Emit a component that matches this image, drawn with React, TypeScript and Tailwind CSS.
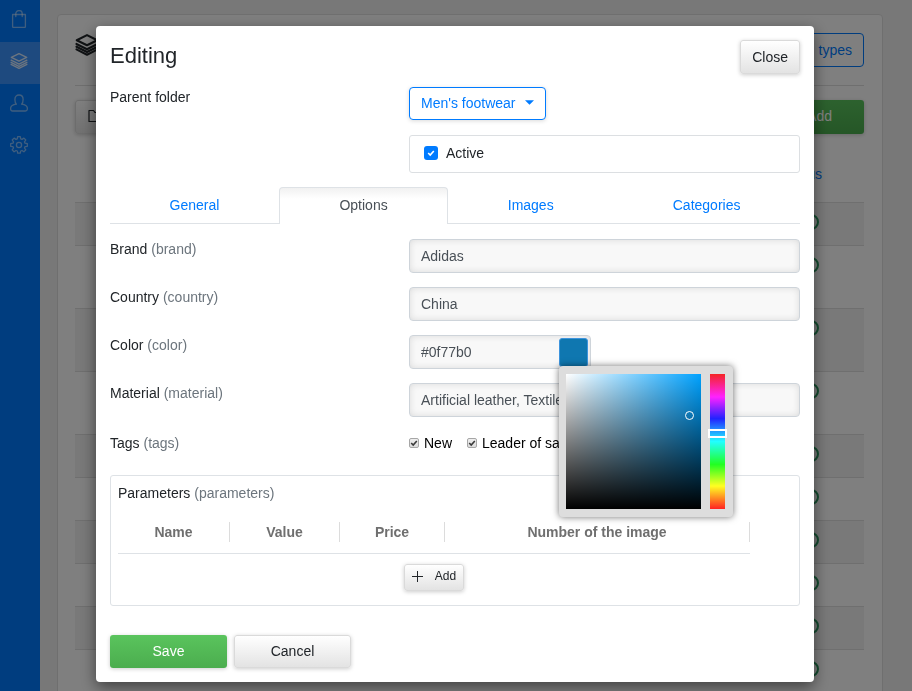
import React, { useState } from "react";

type IconProps = { className?: string };

const stroke = {
  fill: "none",
  stroke: "currentColor",
  strokeLinejoin: "round" as const,
  strokeLinecap: "round" as const,
};

function BagIcon({ className }: IconProps) {
  return (
    <svg viewBox="0 0 18 18" className={className} {...stroke} strokeWidth="1.3" aria-hidden="true">
      <path d="M2.600 4.500h12.800v12.100a.8.8 0 0 1-.8.8H3.400a.8.8 0 0 1-.8-.8z" />
      <path d="M5.800 6.500V3.700a3.200 3.100 0 0 1 6.400 0v2.800" />
    </svg>
  );
}

function LayersIcon({ className }: IconProps) {
  return (
    <svg viewBox="0 0 18 18" className={className} {...stroke} strokeWidth="1.3" aria-hidden="true">
      <path d="M9 1.600 16.700 5.400 9 9.200 1.300 5.400z" />
      <path d="M1.100 8.200 9 12.200l7.900-4" />
      <path d="M1.100 10.300 9 14.300l7.900-4" />
      <path d="M1.100 12.300 9 16.300l7.900-4" />
    </svg>
  );
}

function UserIcon({ className }: IconProps) {
  return (
    <svg viewBox="0 0 18 18" className={className} {...stroke} strokeWidth="1.3" aria-hidden="true">
      <path d="M6.400 10.200C5.400 9.200 4.900 7.200 4.900 5.400 4.900 2.600 6.600 1 9 1s4.100 1.600 4.100 4.400c0 1.800-.5 3.800-1.500 4.800 3.100.4 5.800 1.800 5.800 4.300 0 1.500-.6 2.500-2 2.500H2.600c-1.400 0-2-1-2-2.500 0-2.500 2.700-3.900 5.800-4.300z" />
    </svg>
  );
}

function GearIcon({ className }: IconProps) {
  return (
    <svg viewBox="0 0 18 18" className={className} {...stroke} strokeWidth="1.3" aria-hidden="true">
      <path d="M7.700.7h2.600l.4 2.200 1.300.5 1.900-1.300 1.900 1.900-1.300 1.900.5 1.300 2.300.4v2.700l-2.300.4-.5 1.300 1.300 1.900-1.900 1.900-1.900-1.300-1.300.5-.4 2.200H7.700l-.4-2.200-1.300-.5-1.900 1.300-1.900-1.900 1.300-1.900-.5-1.300-2.300-.4V7.600L3 7.200l.5-1.300L2.200 4l1.900-1.900L6 3.400l1.300-.5z" />
      <circle cx="9" cy="9" r="2.600" />
    </svg>
  );
}

function FolderIcon({ className }: IconProps) {
  return (
    <svg viewBox="0 0 16 16" className={className} {...stroke} strokeWidth="1.2" aria-hidden="true">
      <path d="M1 13.500V2.500h4.500l1.500 2h8v9z" />
    </svg>
  );
}

const navItems = [
  { label: "Orders", Icon: BagIcon },
  { label: "Catalog", Icon: LayersIcon, active: true },
  { label: "Users", Icon: UserIcon },
  { label: "Settings", Icon: GearIcon },
];

const lightButton =
  "rounded-[3px] border border-[#dadada] bg-linear-to-b from-white to-[#e3e3e3] text-[#212529] shadow-[0_1px_4px_rgba(0,0,0,0.2)]";
const greenButton =
  "rounded-[3px] bg-linear-to-b from-[#5ac45d] to-[#4bad4e] text-white shadow-[0_1px_4px_rgba(0,0,0,0.2)]";
const field =
  "h-[34px] rounded border border-[#ced4da] bg-[#f8f8f8] px-[11px] text-[#495057] shadow-[inset_0_0_7px_rgba(0,0,0,0.12)] outline-none";

const rows: { name?: string; alias?: string; tall?: boolean }[] = [
  {},
  { tall: true },
  { tall: true },
  { tall: true },
  {},
  {},
  {},
  {},
  {},
  {},
  { tall: true, name: "Low", alias: "low" },
];

function Sidebar() {
  return (
    <nav className="w-10 shrink-0 bg-[#007bff]">
      {navItems.map(({ label, Icon, active }) => (
        <a
          key={label}
          href="#"
          aria-label={label}
          className={
            active
              ? "flex h-[42px] items-center justify-center bg-[#3d94ff] pr-0.5 pb-1 text-white/80"
              : "flex h-[42px] items-center justify-center pr-0.5 pb-1 text-white/50"
          }
        >
          <Icon className="size-[18px]" />
        </a>
      ))}
    </nav>
  );
}

function CatalogPage() {
  return (
    <main className="min-w-0 flex-1 bg-[#f1f1f1] pt-3.5 pr-[29px] pl-[17px]">
      <div className="min-h-screen rounded border border-[#dfdfdf] bg-white pr-[18px] pl-[17px]">
        <div className="flex items-start justify-between border-b border-[#dfdfdf] pt-[18px] pb-[18px]">
          <LayersIcon className="size-6 text-[#212529] [stroke-width:1.6]" />
          <button className="h-[34px] rounded border border-[#007bff] px-[11px] text-[#007bff]">types</button>
        </div>
        <div className="flex justify-between pt-3.5">
          <button aria-label="Folder" className={`h-[34px] px-3 pb-0.5 ${lightButton}`}>
            <FolderIcon className="size-4" />
          </button>
          <button className={`h-[34px] px-8 pb-0.5 ${greenButton}`}>Add</button>
        </div>
        <table className="mt-[18px] w-full table-fixed border-collapse text-left leading-5">
          <thead>
            <tr className="h-[50px]">
              <th className="w-[134px]" />
              <th className="w-[233px]" />
              <th />
              <th className="w-24 pr-[42px] pb-1.5 text-right font-normal">
                <a href="#" className="text-[#007bff]">Status</a>
              </th>
            </tr>
          </thead>
          <tbody>
            {rows.map((row, i) => (
              <tr key={i} className={`border-t border-[#dfdfdf] odd:bg-[#f3f3f3] ${row.tall ? "h-[63px]" : "h-[43px]"}`}>
                <td />
                <td className="pt-[29px] align-top">{row.name}</td>
                <td className="pt-[29px] align-top">{row.alias}</td>
                <td className="pt-[11px] pr-[45px] align-top">
                  <span className="ml-auto block size-4 rounded-full border-2 border-[#2b9a62]" />
                </td>
              </tr>
            ))}
          </tbody>
        </table>
      </div>
    </main>
  );
}

function Tick({ className }: IconProps) {
  return (
    <svg viewBox="0 0 10 10" className={className} fill="none" stroke="currentColor" aria-hidden="true">
      <path d="M1.500 5 4 7.500 8.500 2.500" />
    </svg>
  );
}

function TagBox({ label }: { label: string }) {
  return (
    <label className="flex items-center gap-[5px] text-black">
      <span className="grid size-2.5 shrink-0 place-items-center">
        <input
          type="checkbox"
          defaultChecked
          className="col-start-1 row-start-1 size-2.5 appearance-none rounded-[2px] border border-[#a6a6a6] bg-linear-to-b from-[#eeeeee] to-[#dcdcdc]"
        />
        <Tick className="pointer-events-none col-start-1 row-start-1 size-2 stroke-2 text-[#3a3a3a]" />
      </span>
      {label}
    </label>
  );
}

function FieldRow({ id, label, alias, children }: { id: string; label: string; alias: string; children: React.ReactNode }) {
  return (
    <div className="grid grid-cols-[299fr_391fr]">
      <label htmlFor={id} className="justify-self-start leading-5">
        {label} <span className="text-[#6c757d]">({alias})</span>
      </label>
      {children}
    </div>
  );
}

function ColorPicker() {
  return (
    <div className="absolute top-[31px] left-[150px] z-10 flex gap-[7px] rounded-[4px] bg-[#dddddd] pt-2 pr-1.5 pb-2 pl-[7px] shadow-[0_0_7px_rgba(0,0,0,0.55)]">
      <div className="relative size-[135px] bg-[#00a2ff] bg-[linear-gradient(to_top,#000,transparent),linear-gradient(to_right,#fff,transparent)]">
        <span className="absolute top-[37px] left-[119px] size-[9px] rounded-full border border-white" />
      </div>
      <input
        type="range"
        aria-label="Hue"
        min={0}
        max={126}
        defaultValue={55}
        className="h-[135px] w-[19px] appearance-none bg-[linear-gradient(to_bottom,#f52525,#ff22ff_17%,#2222ff_33%,#22ffff_50%,#22ff22_67%,#ffff22_83%,#ff2222)] bg-[length:15px_100%] bg-center bg-no-repeat [writing-mode:vertical-lr] [&::-webkit-slider-thumb]:h-[9px] [&::-webkit-slider-thumb]:w-[19px] [&::-webkit-slider-thumb]:appearance-none [&::-webkit-slider-thumb]:border-2 [&::-webkit-slider-thumb]:border-white"
      />
    </div>
  );
}

const tabs = ["General", "Options", "Images", "Categories"];

function EditDialog() {
  const [tab, setTab] = useState("Options");
  return (
    <section
      role="dialog"
      aria-label="Editing"
      className="mx-auto max-w-[718px] rounded-[4px] bg-white p-3.5 text-[#212529] shadow-[0_5px_15px_rgba(0,0,0,0.5)]"
    >
      <header className="flex items-start justify-between">
        <h1 className="text-[22px] leading-8">Editing</h1>
        <button className={`h-[34px] px-[11px] ${lightButton}`}>Close</button>
      </header>

      <div className="mt-[13px] grid grid-cols-[299fr_391fr]">
        <label htmlFor="parent" className="justify-self-start leading-5">Parent folder</label>
        <div className="flex flex-col items-start gap-[15px]">
          <div className="grid w-[137px] items-center">
            <select
              id="parent"
              className="col-start-1 row-start-1 h-[33px] appearance-none rounded border border-[#007bff] bg-white pb-0.5 pl-[11px] text-[#007bff] shadow-[0_1px_4px_rgba(0,0,0,0.15)]"
            >
              <option>Men's footwear</option>
            </select>
            <svg viewBox="0 0 10 5" className="pointer-events-none col-start-1 row-start-1 mr-3 mb-0.5 h-[5px] w-[9px] justify-self-end text-[#007bff]" aria-hidden="true">
              <path d="M0 0h10L5 5z" fill="currentColor" />
            </svg>
          </div>
          <label className="flex h-[38px] w-full items-center gap-2 rounded-[3px] border border-[#dcdfe2] px-3.5 pb-0.5">
            <span className="grid size-3.5 place-items-center">
              <input type="checkbox" defaultChecked className="col-start-1 row-start-1 size-3.5 appearance-none rounded-[3px] bg-[#007bff]" />
              <Tick className="pointer-events-none col-start-1 row-start-1 size-2 stroke-2 text-white" />
            </span>
            Active
          </label>
        </div>
      </div>

      <div role="tablist" className="mt-3.5 flex border-b border-[#dee2e6]">
        {tabs.map((name) => (
          <button
            key={name}
            role="tab"
            aria-selected={tab === name}
            onClick={() => setTab(name)}
            className={
              tab === name
                ? "-mb-px h-[37px] flex-auto rounded-t border border-b-0 border-[#dee2e6] bg-linear-to-b from-[#f1f1f1] to-white to-30% pb-0.5 text-[#495057]"
                : "-mb-px h-[37px] flex-auto pb-0.5 text-[#007bff]"
            }
          >
            {name}
          </button>
        ))}
      </div>

      <div className="mt-[15px] flex flex-col gap-3.5">
        <FieldRow id="brand" label="Brand" alias="brand">
          <input id="brand" defaultValue="Adidas" className={field} />
        </FieldRow>
        <FieldRow id="country" label="Country" alias="country">
          <input id="country" defaultValue="China" className={field} />
        </FieldRow>
        <FieldRow id="color" label="Color" alias="color">
          <div className="relative grid w-[182px] items-center">
            <input id="color" defaultValue="#0f77b0" className={`col-start-1 row-start-1 w-full ${field}`} />
            <button aria-label="Pick a color" className="col-start-1 row-start-1 mr-[3px] size-[29px] justify-self-end rounded-[3px] border border-[#3d94dd] bg-[#0f77b0]" />
            <ColorPicker />
          </div>
        </FieldRow>
        <FieldRow id="material" label="Material" alias="material">
          <input id="material" defaultValue="Artificial leather, Textile" className={field} />
        </FieldRow>
      </div>

      <fieldset className="mt-4 grid grid-cols-[299fr_391fr] leading-5">
        <legend className="contents">
          <span>
            Tags <span className="text-[#6c757d]">(tags)</span>
          </span>
        </legend>
        <div className="flex gap-[15px]">
          <TagBox label="New" />
          <TagBox label="Leader of sales" />
        </div>
      </fieldset>

      <div className="mt-[22px] rounded-[3px] border border-[#dee2e6] px-[7px] pt-[7px] pb-3.5">
        <p className="leading-5">
          Parameters <span className="text-[#6c757d]">(parameters)</span>
        </p>
        <div className="mr-[42px]">
          <table className="w-full table-fixed border-collapse border-b border-[#dee2e6] text-[#6f6f6f]">
            <thead>
              <tr className="h-[50px] leading-5">
                <th className="w-[112px] pt-2"><div className="border-r border-[#dcdcdc]">Name</div></th>
                <th className="w-[110px] pt-2"><div className="border-r border-[#dcdcdc]">Value</div></th>
                <th className="w-[105px] pt-2"><div className="border-r border-[#dcdcdc]">Price</div></th>
                <th className="pt-2"><div className="border-r border-[#dcdcdc]">Number of the image</div></th>
              </tr>
            </thead>
          </table>
          <div className="mt-2.5 flex justify-center">
            <button className={`flex h-[27px] items-center gap-3 px-[7px] pb-0.5 text-xs ${lightButton}`}>
              <svg viewBox="0 0 11 11" className="size-[11px]" {...stroke} aria-hidden="true">
                <path d="M5.500 0v11M0 5.500h11" />
              </svg>
              Add
            </button>
          </div>
        </div>
      </div>

      <footer className="mt-[29px] flex gap-[7px]">
        <button className={`h-[33px] w-[117px] ${greenButton}`}>Save</button>
        <button className={`h-[33px] w-[117px] ${lightButton}`}>Cancel</button>
      </footer>
    </section>
  );
}

export default function App() {
  return (
    <div className="h-screen overflow-hidden text-sm [font-family:'Liberation_Sans',Arial,sans-serif]">
      <div className="flex h-screen overflow-hidden text-[#212529]">
        <Sidebar />
        <CatalogPage />
      </div>
      <div className="fixed inset-0 overflow-hidden bg-black/50 pt-[26px] pr-0.5">
        <EditDialog />
      </div>
    </div>
  );
}
